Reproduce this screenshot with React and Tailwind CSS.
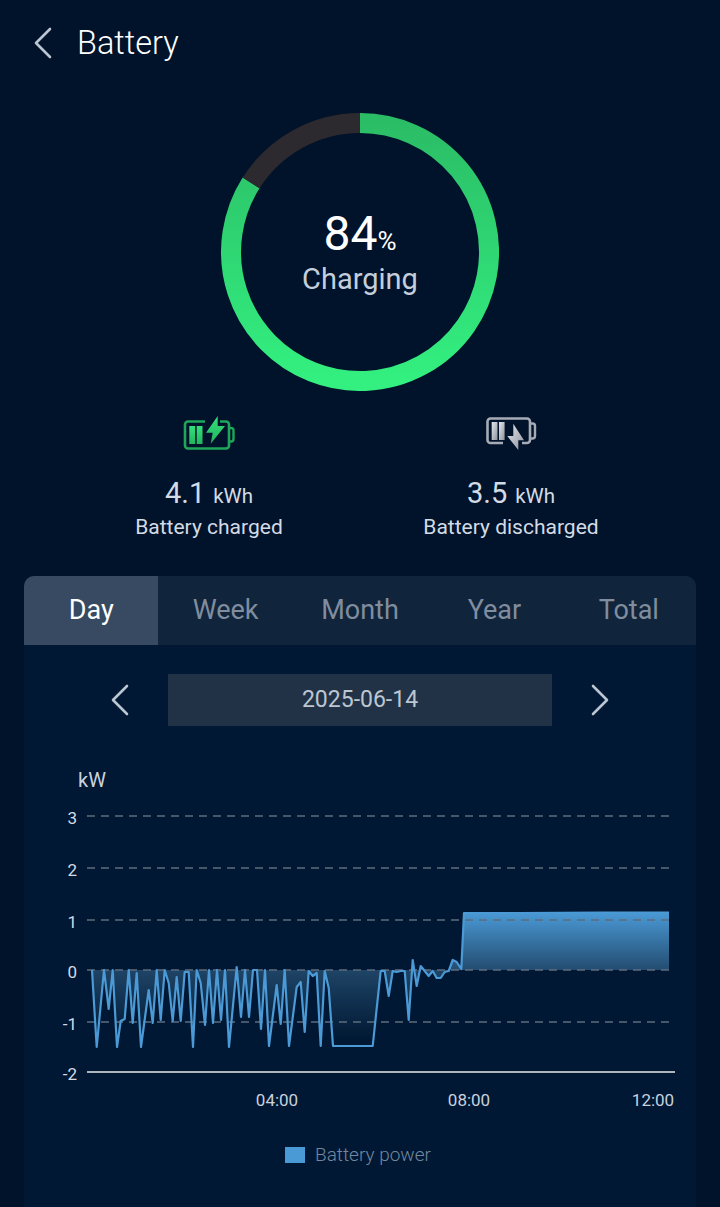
import React from 'react';

const tabs = ['Day', 'Week', 'Month', 'Year', 'Total'];

// traced from the reference, page coordinates
const trace = [
  [92, 970], [96.7, 1047], [104, 970], [108.7, 1009], [112.7, 970], [117, 1047], [120.7, 1021], [124.7, 1019],
  [128.7, 970], [132.7, 1023], [136.7, 973], [141, 1047], [148.7, 990], [152.7, 1023], [156.7, 970], [160.7, 1020],
  [164.7, 970], [168.7, 983], [172.7, 1021], [176.7, 977], [180.7, 1021], [184.7, 972], [188.7, 972], [193, 1047],
  [196.7, 970], [200.7, 983], [205, 1025], [209, 970], [213, 1023], [217, 970], [221, 1020], [225, 970],
  [229, 1047], [236.7, 967], [241, 1017], [245, 970], [249, 1017], [253, 970], [257, 970], [261, 1029],
  [265, 970], [269, 1046], [276.7, 985], [280.7, 1024], [284.7, 970], [289, 1046], [296.7, 987], [300.7, 982],
  [304.7, 1032], [308.7, 971], [312.7, 976], [316.7, 973], [320.7, 1046], [324.7, 971], [328.7, 988], [333, 1046],
  [372.7, 1046], [380.7, 971], [384.7, 971], [388.7, 996], [392.7, 971], [396.7, 972], [400.7, 971], [404.7, 971],
  [408.7, 1020], [412.7, 960], [416.7, 986], [420.7, 966], [428.7, 976], [432.7, 971], [436.7, 978], [440.7, 978],
  [444.7, 972], [448.7, 971], [452.7, 960], [456.7, 962], [461.3, 969], [464, 913], [520, 913], [600, 912.5], [669, 912.5],
];

const line = trace.map((p) => p.join(',')).join(' ');
const area = `91,970 ${line} 669,970`;
const grid = [816, 868, 920, 970, 1022];
const yLabels = [['3', 816], ['2', 868], ['1', 920], ['0', 970], ['-1', 1022], ['-2', 1072]];

const Chevron = ({ dir = 'left', className }) => (
  <svg width="20" height="32" viewBox="0 0 20 32" className={className} fill="none" stroke="currentColor" strokeWidth="2.6" strokeLinecap="round" strokeLinejoin="round">
    <path d={dir === 'left' ? 'M17 2 L3 16 L17 30' : 'M3 2 L17 16 L3 30'} />
  </svg>
);

const ChargedIcon = () => (
  <svg width="52" height="36" viewBox="183 414 52 36" fill="none">
    <defs>
      <linearGradient id="chg" x1="0" y1="0" x2="0" y2="1">
        <stop offset="0" stopColor="#35e07a" />
        <stop offset="1" stopColor="#22b45e" />
      </linearGradient>
    </defs>
    <path d="M205 420.5 H188 a3 3 0 0 0 -3 3 V444.5 a3 3 0 0 0 3 3 H226 a3 3 0 0 0 3 -3 V423.5 a3 3 0 0 0 -3 -3 H220" stroke="#1fa65a" strokeWidth="2.6" />
    <path d="M229.5 427 H231 a2.5 2.5 0 0 1 2.5 2.5 V438 a2.5 2.5 0 0 1 -2.5 2.5 H229.5" stroke="#1fa65a" strokeWidth="2.4" />
    <rect x="189.3" y="425" width="5.9" height="18" fill="url(#chg)" />
    <rect x="196.7" y="425" width="5.8" height="18" fill="url(#chg)" />
    <path d="M217.7 415 L206 431.7 H212.7 L210.7 442.7 L225 425 H217.7 Z" fill="url(#chg)" />
  </svg>
);

const DischargedIcon = () => (
  <svg width="52" height="36" viewBox="485 414 52 36" fill="none">
    <defs>
      <linearGradient id="dis" x1="0" y1="0" x2="1" y2="1">
        <stop offset="0" stopColor="#e4e7ee" />
        <stop offset="1" stopColor="#8e929b" />
      </linearGradient>
    </defs>
    <path d="M503 442 H490.5 a3 3 0 0 1 -3 -3 V420.5 a3 3 0 0 1 3 -3 H527 a3 3 0 0 1 3 3 V439 a3 3 0 0 1 -3 3 H522" stroke="#a6abb6" strokeWidth="2.6" />
    <path d="M530.5 422.5 H532.5 a2.5 2.5 0 0 1 2.5 2.5 V435 a2.5 2.5 0 0 1 -2.5 2.5 H530.5" stroke="#a6abb6" strokeWidth="2.4" />
    <rect x="491.7" y="421" width="5.8" height="18" fill="url(#dis)" />
    <rect x="499" y="421" width="5.6" height="18" fill="url(#dis)" />
    <path d="M513.3 422.7 L524 439.3 H518.3 V449 L507.3 435 H513.3 Z" fill="url(#dis)" />
  </svg>
);

const Stat = ({ value, label, icon }) => (
  <div className="flex flex-col items-center">
    <div className="flex h-[36px] items-center">{icon}</div>
    <div className="mt-[25px] flex h-[34px] items-baseline gap-[8px] text-[#d3dbe6]">
      <span className="text-[29px] leading-[34px]">{value}</span>
      <span className="text-[20.5px] leading-[34px]">kWh</span>
    </div>
    <div className="mt-[5px] text-[21px] leading-[24px] text-[#d3dbe6]">{label}</div>
  </div>
);

const Ring = () => (
  <div className="relative h-[278px] w-[278px]">
    <svg width="278" height="278" viewBox="0 0 278 278" fill="none">
      <defs>
        <linearGradient id="ring" x1="0" y1="0" x2="0" y2="1">
          <stop offset="0" stopColor="#2bbd66" />
          <stop offset="1" stopColor="#33f080" />
        </linearGradient>
      </defs>
      {/* 84% arc, grey rest */}
      <path d="M139 10 A129 129 0 1 1 30.1 69.9" stroke="url(#ring)" strokeWidth="20" />
      <path d="M30.1 69.9 A129 129 0 0 1 139 10" stroke="#2c2a2e" strokeWidth="20" />
    </svg>
    <div className="absolute inset-0 flex flex-col items-center pt-[92px]">
      <div className="flex h-[58px] items-baseline text-white">
        <span className="text-[48px] leading-[58px]">84</span>
        <span className="text-[26px] leading-[58px]">%</span>
      </div>
      <div className="-mt-[1px] text-[29px] leading-[34px] text-[#c5cedd]">Charging</div>
    </div>
  </div>
);

const Chart = () => (
  <svg width="672" height="447" viewBox="24 760 672 447" className="block" fontFamily="Roboto, sans-serif">
    <defs>
      <linearGradient id="fillTop" gradientUnits="userSpaceOnUse" x1="0" y1="912" x2="0" y2="970">
        <stop offset="0" stopColor="#4a9ad6" />
        <stop offset="1" stopColor="#234c70" />
      </linearGradient>
      <linearGradient id="fillBottom" gradientUnits="userSpaceOnUse" x1="0" y1="970" x2="0" y2="1040">
        <stop offset="0" stopColor="#1f4466" />
        <stop offset="1" stopColor="#001833" />
      </linearGradient>
      <clipPath id="above"><rect x="80" y="900" width="600" height="70" /></clipPath>
      <clipPath id="below"><rect x="80" y="970" width="600" height="90" /></clipPath>
    </defs>
    <text x="78" y="787" fontSize="20" fill="#c8d2df">kW</text>
    <polygon points={area} fill="url(#fillTop)" clipPath="url(#above)" />
    <polygon points={area} fill="url(#fillBottom)" clipPath="url(#below)" />
    {grid.map((y) => (
      <line key={y} x1="87" x2="670" y1={y} y2={y} stroke="#5d6c7e" strokeWidth="1.5" strokeDasharray="8 6" />
    ))}
    <polyline points={line} fill="none" stroke="#4b9ad6" strokeWidth="2.2" strokeLinejoin="round" />
    <line x1="87" x2="675" y1="1072" y2="1072" stroke="#aeb4bc" strokeWidth="2" />
    {yLabels.map(([t, y]) => (
      <text key={t} x="77" y={y + 8} fontSize="17" textAnchor="end" fill="#d3dbe6">{t}</text>
    ))}
    <text x="277" y="1106" fontSize="17" textAnchor="middle" fill="#c8d2df">04:00</text>
    <text x="469" y="1106" fontSize="17" textAnchor="middle" fill="#c8d2df">08:00</text>
    <text x="653" y="1106" fontSize="17" textAnchor="middle" fill="#c8d2df">12:00</text>
    <rect x="285" y="1147" width="20" height="16" fill="#4a9ad6" />
    <text x="315" y="1161" fontSize="19" fontWeight="300" fill="#73879e">Battery power</text>
  </svg>
);

export default function App() {
  return (
    <div className="h-[1207px] overflow-hidden bg-[#00132a] font-['Roboto',sans-serif]">
      {/* Header */}
      <div className="flex h-[85px] items-center pl-[33px]">
        <Chevron className="text-[#bcc6d3]" />
        <h1 className="ml-[24px] text-[32.5px] font-light leading-[40px] text-white">Battery</h1>
      </div>

      <div className="mt-[28px] flex justify-center">
        <Ring />
      </div>

      {/* Stats */}
      <div className="mt-[24px] grid grid-cols-2 px-[58px]">
        <Stat value="4.1" label="Battery charged" icon={<ChargedIcon />} />
        <Stat value="3.5" label="Battery discharged" icon={<DischargedIcon />} />
      </div>

      {/* Card */}
      <div className="mx-[24px] mt-[37px] overflow-hidden rounded-t-[10px] bg-[#001833]">
        <div className="grid h-[69px] grid-cols-5 bg-[#10243c]">
          {tabs.map((t) => (
            <div
              key={t}
              className={`flex items-center justify-center text-[27px] ${t === 'Day' ? 'bg-[#374a61] text-white' : 'text-[#808d9e]'}`}
            >
              {t}
            </div>
          ))}
        </div>
        <div className="mt-[29px] flex h-[52px] items-center justify-center">
          <Chevron className="text-[#bcc6d3]" />
          <div className="mx-[38px] flex h-[52px] w-[384px] items-center justify-center bg-[#223246] text-[23px] text-[#bcc6d2]">
            2025-06-14
          </div>
          <Chevron dir="right" className="text-[#bcc6d3]" />
        </div>
        <div className="mt-[34px]">
          <Chart />
        </div>
      </div>
    </div>
  );
}
